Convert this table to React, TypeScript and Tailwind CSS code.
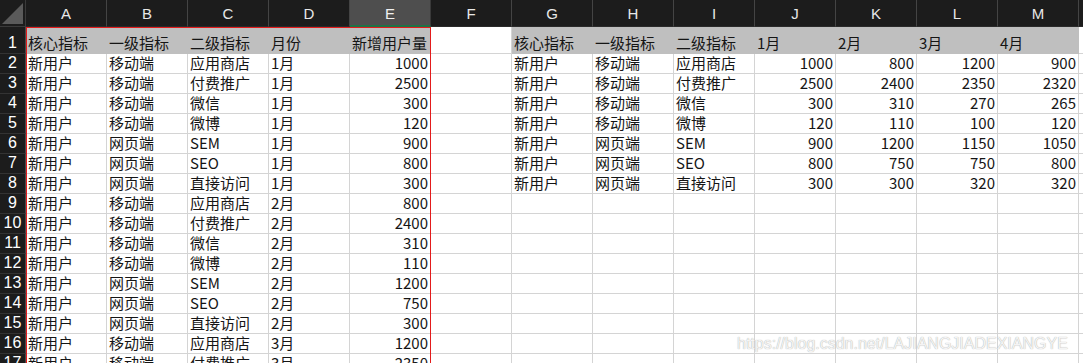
import React from "react";

// Sheet columns A..M
const COLS = ["A", "B", "C", "D", "E", "F", "G", "H", "I", "J", "K", "L", "M"];

type Row = (string | number | null)[];

// Left table (A-E), right table (G-M)
const left: Row[] = [
  ["核心指标", "一级指标", "二级指标", "月份", "新增用户量"],
  ["新用户", "移动端", "应用商店", "1月", 1000],
  ["新用户", "移动端", "付费推广", "1月", 2500],
  ["新用户", "移动端", "微信", "1月", 300],
  ["新用户", "移动端", "微博", "1月", 120],
  ["新用户", "网页端", "SEM", "1月", 900],
  ["新用户", "网页端", "SEO", "1月", 800],
  ["新用户", "网页端", "直接访问", "1月", 300],
  ["新用户", "移动端", "应用商店", "2月", 800],
  ["新用户", "移动端", "付费推广", "2月", 2400],
  ["新用户", "移动端", "微信", "2月", 310],
  ["新用户", "移动端", "微博", "2月", 110],
  ["新用户", "网页端", "SEM", "2月", 1200],
  ["新用户", "网页端", "SEO", "2月", 750],
  ["新用户", "网页端", "直接访问", "2月", 300],
  ["新用户", "移动端", "应用商店", "3月", 1200],
  ["新用户", "移动端", "付费推广", "3月", 2350],
];

const right: Row[] = [
  ["核心指标", "一级指标", "二级指标", "1月", "2月", "3月", "4月"],
  ["新用户", "移动端", "应用商店", 1000, 800, 1200, 900],
  ["新用户", "移动端", "付费推广", 2500, 2400, 2350, 2320],
  ["新用户", "移动端", "微信", 300, 310, 270, 265],
  ["新用户", "移动端", "微博", 120, 110, 100, 120],
  ["新用户", "网页端", "SEM", 900, 1200, 1150, 1050],
  ["新用户", "网页端", "SEO", 800, 750, 750, 800],
  ["新用户", "网页端", "直接访问", 300, 300, 320, 320],
];

function Cell({ value, gray }: { value: string | number | null; gray: boolean }) {
  const isNum = typeof value === "number";
  return (
    <div
      className={`flex items-end whitespace-nowrap border-r border-b px-[2px] pb-[1px] text-[15px] leading-[18px] text-[#151515] ${
        isNum ? "justify-end" : "justify-start"
      } ${gray ? "bg-[#bfbfbf] border-[#bfbfbf]" : "bg-white border-[#d4d4d4]"}`}
    >
      {value}
    </div>
  );
}

export default function App() {
  const rowCount = 17;
  const rows = Array.from({ length: rowCount }, (_, r) => {
    const cells: (string | number | null)[] = [];
    for (let c = 0; c < 13; c++) {
      if (c < 5) cells.push(left[r]?.[c] ?? null);
      else if (c === 5) cells.push(null);
      else cells.push(right[r]?.[c - 6] ?? null);
    }
    return cells;
  });

  return (
    <div
      className="relative h-[363px] w-[1083px] overflow-hidden bg-white"
      style={{ fontFamily: '"Noto Sans CJK SC", "Liberation Sans", sans-serif' }}
    >
      <div className="grid grid-cols-[26px_repeat(13,81px)_1fr] grid-rows-[27px_27px_repeat(16,20px)]">
        {/* corner */}
        <div className="relative border-r border-b border-[#3a3a3a] bg-[#1c1c1c]">
          <svg className="absolute left-0 top-0" width="25" height="26" viewBox="0 0 25 26">
            <polygon points="2,24 23,24 23,3" fill="#5a5a5a" />
          </svg>
        </div>
        {/* column headers */}
        {COLS.map((c) =>
          c === "E" ? (
            <div
              key={c}
              className="flex items-center justify-center border-r border-b-2 border-r-[#3a3a3a] border-b-[#1e7145] bg-[#4e4e4e] pt-[2px] font-['Liberation_Sans'] text-[15px] leading-[18px] text-[#f0f0f0]"
            >
              {c}
            </div>
          ) : (
            <div
              key={c}
              className="flex items-center justify-center border-r border-b border-[#444] border-b-[#2a2a2a] bg-[#1c1c1c] pt-[2px] font-['Liberation_Sans'] text-[15px] leading-[18px] text-[#e8e8e8]"
            >
              {c}
            </div>
          )
        )}
        <div className="border-b border-[#2a2a2a] bg-[#1c1c1c]" />

        {/* body */}
        {rows.map((cells, r) => (
          <React.Fragment key={r}>
            <div className="flex items-end justify-center border-r border-b border-r-[#4a4a4a] border-b-[#333] bg-[#1c1c1c] pb-[1px] font-['Liberation_Sans'] text-[16px] leading-[18px] text-white">
              {r + 1}
            </div>
            {cells.map((v, c) => (
              <Cell key={c} value={v} gray={r === 0 && c !== 5} />
            ))}
            <div className="border-b border-[#d4d4d4] bg-white" />
          </React.Fragment>
        ))}
      </div>

      {/* copy marquee around A1:E */}
      <div className="pointer-events-none absolute left-[26px] top-[27px] h-[400px] w-[405px] border border-[#e31b1b]" />

      {/* watermark */}
      <div
        className="pointer-events-none absolute left-[737px] top-[332px] whitespace-nowrap text-[16px] text-[#f4f4f4] [text-shadow:0_0_1px_#9a9a9a]"
        style={{ fontFamily: '"Liberation Sans", sans-serif' }}
      >
        https://blog.csdn.net/LAJIANGJIADEXIANGYE
      </div>
    </div>
  );
}
